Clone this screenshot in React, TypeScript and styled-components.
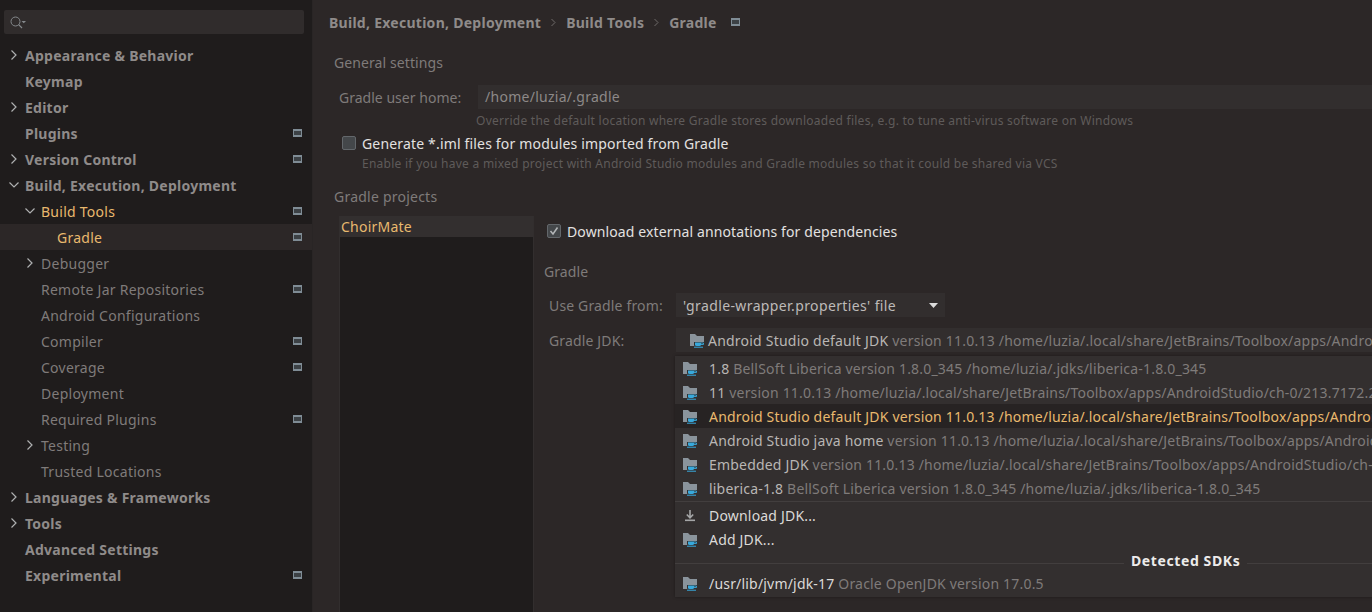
import React from "react";
import styled, { createGlobalStyle } from "styled-components";

const FONT = `"Noto Sans", "Open Sans", sans-serif`;

const Global = createGlobalStyle`
  html, body { margin: 0; padding: 0; background: #2c2727; overflow: hidden; }
  * { box-sizing: border-box; }
  #root { width: 1372px; height: 612px; }
`;

const Page = styled.div`
  display: flex; width: 1372px; height: 612px; overflow: hidden;
  font-family: ${FONT}; font-size: 14px; color: #a5a19f; background: #2c2727;
`;
const Sidebar = styled.aside`
  width: 313px; flex: none; background: #1f1c1c; border-right: 1px solid #292525;
  padding-top: 10px; display: flex; flex-direction: column;
`;
const Search = styled.div`
  margin: 0 8px 0 4px; height: 24px; background: #302c2c; border-radius: 2px;
  display: flex; align-items: center; padding-left: 6px;
`;
const Tree = styled.nav`margin-top: 8px; display: flex; flex-direction: column;`;
const Row = styled.div<{ $level: number; $selected?: boolean }>`
  height: 26px; flex: none; display: flex; align-items: center; position: relative;
  padding-left: ${(p) => 25 + p.$level * 16}px; padding-right: 10px;
  background: ${(p) => (p.$selected ? "#2c2727" : "transparent")};
`;
const RowLabel = styled.span<{ $bold?: boolean; $accent?: boolean }>`
  flex: 1; white-space: nowrap; font-weight: ${(p) => (p.$bold ? 700 : 400)};
  letter-spacing: ${(p) => (p.$bold ? "0.25px" : "0.26px")};
  color: ${(p) => (p.$accent ? "#e9b96e" : p.$bold ? "#8f8b8a" : "#7f7b7a")};
`;
const Arrow = styled.span<{ $level: number }>`
  position: absolute; left: ${(p) => 8 + p.$level * 16}px; top: 7px; width: 12px; height: 12px; display: flex;
`;
const Main = styled.main`
  flex: 1; min-width: 0; position: relative; display: flex; flex-direction: column; padding-left: 16px;
`;
const Crumbs = styled.div`
  height: 44px; flex: none; display: flex; align-items: center; gap: 9px; font-weight: 700; color: #8f8b8a; letter-spacing: 0.27px;
`;
const Sep = styled.span`display: flex; width: 7px; margin: 0;`;
const CrumbPin = styled.span`display: flex; margin-left: 5px;`;
const SectionTitle = styled.div<{ $top: number; $left?: number; $ls?: number }>`
  margin-top: ${(p) => p.$top}px; margin-left: ${(p) => p.$left ?? 5}px; height: 20px; line-height: 20px;
  color: #7f7b7a; letter-spacing: ${(p) => p.$ls ?? 0.09}px;
`;
const FieldRow = styled.div<{ $top: number }>`
  margin-top: ${(p) => p.$top}px; display: flex; align-items: center; height: 24px; margin-left: 10px;
`;
const FieldLabel = styled.span<{ $w: number; $ls?: number }>`
  width: ${(p) => p.$w}px; flex: none; color: #7f7b7a; white-space: nowrap; letter-spacing: ${(p) => p.$ls ?? 0.02}px;
`;
const Input = styled.div`
  flex: 1; height: 24px; line-height: 24px; background: #322e2e; color: #8d8988; padding-left: 7px; font-size: 14px; letter-spacing: 0.27px;
`;
const Hint = styled.div<{ $left: number; $top: number }>`
  margin-left: ${(p) => p.$left}px; margin-top: ${(p) => p.$top}px; height: 16px; line-height: 16px; font-size: 12px;
  color: #5f5b5a; white-space: nowrap; letter-spacing: 0.26px;
`;
const CheckRow = styled.label<{ $left: number; $top: number; $ls: number }>`
  margin-left: ${(p) => p.$left}px; margin-top: ${(p) => p.$top}px; display: flex; align-items: center; gap: 6px; height: 18px;
  color: #e3e1e0; white-space: nowrap; letter-spacing: ${(p) => p.$ls}px;
`;
const Box = styled.span`
  width: 14px; height: 14px; flex: none; border-radius: 2px; background: #44474a; border: 1px solid #63676b;
  display: flex; align-items: center; justify-content: center;
`;
const Projects = styled.div`flex: 1; min-height: 0; margin-top: 9px; display: flex; padding-left: 10px;`;
const ProjectList = styled.div`
  width: 195px; flex: none; background: #1f1c1c; border-left: 1px solid #322e2e; border-right: 1px solid #322e2e;
`;
const ProjectItem = styled.div`
  height: 21px; line-height: 21px; background: #332f2f; color: #e9b96e; padding-left: 1px; letter-spacing: 0.23px;
`;
const Detail = styled.div`flex: 1; min-width: 0; display: flex; flex-direction: column; padding-left: 10px;`;
const GroupTitle = styled(SectionTitle)`margin-left: 0;`;
const Combo = styled.div<{ $w?: number }>`
  height: 24px; ${(p) => (p.$w ? `width: ${p.$w}px;` : "flex: 1; min-width: 0;")} background: #322e2e;
  padding-top: 1px;
  display: flex; align-items: center; white-space: nowrap; overflow: hidden; position: relative; letter-spacing: 0.22px;
`;
const DetailField = styled(FieldRow)`margin-left: 5px;`;
const ComboValue = styled.span`flex: 1; padding-left: 7px; color: #bdbab8; letter-spacing: 0.38px;`;
const ArrowCell = styled.span`
  width: 24px; height: 23px; flex: none; display: flex; align-items: center; justify-content: center;
`;
const IconSlot = styled.span<{ $left: number }>`margin-left: ${(p) => p.$left}px; margin-right: 3px; display: flex; flex: none;`;
const Strong = styled.span<{ $c?: string }>`color: ${(p) => p.$c ?? "#b9b6b4"};`;
const Dim = styled.span<{ $c?: string }>`color: ${(p) => p.$c ?? "#7f7b7a"};`;
const Popup = styled.div`
  position: absolute; left: 362px; top: 356px; width: 700px; height: 241px; background: #332f2f;
  display: flex; flex-direction: column; white-space: nowrap; overflow: hidden; letter-spacing: 0.19px;
  box-shadow: 0 0 3px rgba(0,0,0,.35);
`;
const Option = styled.div<{ $active?: boolean }>`
  height: 24px; flex: none; display: flex; align-items: center; padding: 1px 0 0 8px;
  background: ${(p) => (p.$active ? "#272323" : "transparent")};
`;
const OptionIcon = styled.span`width: 26px; flex: none; display: flex;`;
const Divider = styled.div<{ $top: number; $bottom: number }>`
  height: 1px; flex: none; background: #423e3e; margin: ${(p) => p.$top}px 0 ${(p) => p.$bottom}px;
`;
const GroupHeader = styled.div`
  position: absolute; left: 449px; top: 196px; padding: 0 7px; height: 18px; line-height: 18px;
  background: #332f2f; font-weight: 700; color: #ecebea; letter-spacing: 0.6px;
`;

const Pin = () => (
  <svg width="9" height="8" viewBox="0 0 9 8" style={{ flex: "none" }}>
    <rect width="9" height="8" fill="#7f8c95" />
    <rect x="1" y="2" width="7" height="4" fill="#3c4145" />
  </svg>
);
const Right = () => (
  <svg width="12" height="12" viewBox="0 0 12 12"><path d="M3.5 1.5 8 6 3.5 10.5" fill="none" stroke="#afb0b1" strokeWidth="1.2" /></svg>
);
const Down = () => (
  <svg width="12" height="12" viewBox="0 0 12 12"><path d="M1.5 3.5 6 8 10.5 3.5" fill="none" stroke="#afb0b1" strokeWidth="1.2" /></svg>
);
const Chevron = () => (
  <svg width="6" height="9" viewBox="0 0 6 9"><path d="M1.5 1 5 4.5 1.5 8" fill="none" stroke="#6f6b6a" /></svg>
);
const Jdk = () => (
  <svg width="15" height="15" viewBox="0 0 15 15" style={{ flex: "none" }}>
    <path d="M0 1H5L7 3H14V9H10V13H0Z" fill="#8a949c" />
    <path d="M4 9H11V12A1.5 1.5 0 0 1 9.5 13.5H5.5A1.5 1.5 0 0 1 4 12Z" fill="#332f2f" />
    <path d="M5 9.5H11V11.5A1.5 1.5 0 0 1 9.5 13H6.5A1.5 1.5 0 0 1 5 11.5Z" fill="#38a9dc" />
    <path d="M11 10H13.5V11.5H11" fill="none" stroke="#38a9dc" strokeWidth="0.9" />
    <rect x="4" y="13.7" width="9" height="1" fill="#38a9dc" />
  </svg>
);
const Download = () => (
  <svg width="14" height="14" viewBox="0 0 14 14" style={{ flex: "none" }}>
    <path d="M7 1V8M3.8 5.5 7 8.8 10.2 5.5" fill="none" stroke="#a5a6a7" strokeWidth="1.6" />
    <rect x="2" y="10.5" width="10" height="1.6" fill="#a5a6a7" />
  </svg>
);
const SearchIcon = () => (
  <svg width="18" height="14" viewBox="0 0 18 14">
    <circle cx="5.5" cy="6.5" r="4.5" fill="none" stroke="#85898c" strokeWidth="1" />
    <path d="M8.7 9.7 12 13" stroke="#85898c" strokeWidth="1.2" />
    <path d="M11.5 6H16L13.75 8.2Z" fill="#85898c" />
  </svg>
);

type Item = { t: string; l: number; b?: boolean; a?: "r" | "d"; pin?: boolean; sel?: boolean; acc?: boolean };
const items: Item[] = [
  { t: "Appearance & Behavior", l: 0, b: true, a: "r" },
  { t: "Keymap", l: 0, b: true },
  { t: "Editor", l: 0, b: true, a: "r" },
  { t: "Plugins", l: 0, b: true, pin: true },
  { t: "Version Control", l: 0, b: true, a: "r", pin: true },
  { t: "Build, Execution, Deployment", l: 0, b: true, a: "d" },
  { t: "Build Tools", l: 1, a: "d", pin: true, acc: true },
  { t: "Gradle", l: 2, pin: true, sel: true, acc: true },
  { t: "Debugger", l: 1, a: "r" },
  { t: "Remote Jar Repositories", l: 1, pin: true },
  { t: "Android Configurations", l: 1 },
  { t: "Compiler", l: 1, pin: true },
  { t: "Coverage", l: 1, pin: true },
  { t: "Deployment", l: 1 },
  { t: "Required Plugins", l: 1, pin: true },
  { t: "Testing", l: 1, a: "r" },
  { t: "Trusted Locations", l: 1 },
  { t: "Languages & Frameworks", l: 0, b: true, a: "r" },
  { t: "Tools", l: 0, b: true, a: "r" },
  { t: "Advanced Settings", l: 0, b: true },
  { t: "Experimental", l: 0, b: true, pin: true },
];

const P = "/home/luzia/.local/share/JetBrains/Toolbox/apps/AndroidStudio/ch-0/213.7172.25.2113.9123335/jbr";
const options = [
  { s: "1.8", d: "BellSoft Liberica version 1.8.0_345 /home/luzia/.jdks/liberica-1.8.0_345" },
  { s: "11", d: `version 11.0.13 ${P}` },
  { s: "Android Studio default JDK", d: `version 11.0.13 ${P}`, active: true },
  { s: "Android Studio java home", d: `version 11.0.13 ${P}` },
  { s: "Embedded JDK", d: `version 11.0.13 ${P}` },
  { s: "liberica-1.8", d: "BellSoft Liberica version 1.8.0_345 /home/luzia/.jdks/liberica-1.8.0_345" },
];

export default function App() {
  return (
    <Page>
      <Global />
      <Sidebar>
        <Search><SearchIcon /></Search>
        <Tree>
          {items.map((i) => (
            <Row key={i.t} $level={i.l} $selected={i.sel}>
              {i.a && <Arrow $level={i.l}>{i.a === "r" ? <Right /> : <Down />}</Arrow>}
              <RowLabel $bold={i.b} $accent={i.acc}>{i.t}</RowLabel>
              {i.pin && <Pin />}
            </Row>
          ))}
        </Tree>
      </Sidebar>
      <Main>
        <Crumbs>
          <span>Build, Execution, Deployment</span>
          <Sep><Chevron /></Sep>
          <span>Build Tools</span>
          <Sep><Chevron /></Sep>
          <span>Gradle</span>
          <CrumbPin><Pin /></CrumbPin>
        </Crumbs>
        <SectionTitle $top={9}>General settings</SectionTitle>
        <FieldRow $top={12}>
          <FieldLabel $w={139}>Gradle user home:</FieldLabel>
          <Input>/home/luzia/.gradle</Input>
        </FieldRow>
        <Hint $left={147} $top={4}>Override the default location where Gradle stores downloaded files, e.g. to tune anti-virus software on Windows</Hint>
        <CheckRow $left={13} $top={5} $ls={0.17}><Box />Generate *.iml files for modules imported from Gradle</CheckRow>
        <Hint $left={33} $top={4}>Enable if you have a mixed project with Android Studio modules and Gradle modules so that it could be shared via VCS</Hint>
        <SectionTitle $top={15} $ls={0.23}>Gradle projects</SectionTitle>
        <Projects>
          <ProjectList><ProjectItem>ChoirMate</ProjectItem></ProjectList>
          <Detail>
            <CheckRow $left={3} $top={6} $ls={0.12}>
              <Box><svg width="10" height="10" viewBox="0 0 10 10"><path d="M1.5 5 4 8 8.5 1.5" fill="none" stroke="#b4b6b8" strokeWidth="1.5" /></svg></Box>
              Download external annotations for dependencies
            </CheckRow>
            <GroupTitle $top={22}>Gradle</GroupTitle>
            <DetailField $top={11}>
              <FieldLabel $w={127} $ls={0.15}>Use Gradle from:</FieldLabel>
              <Combo $w={269}>
                <ComboValue>'gradle-wrapper.properties' file</ComboValue>
                <ArrowCell><svg width="9" height="5" viewBox="0 0 9 5"><path d="M0 0H9L4.5 5Z" fill="#dcdcdc" /></svg></ArrowCell>
              </Combo>
            </DetailField>
            <DetailField $top={11}>
              <FieldLabel $w={127} $ls={0.15}>Gradle JDK:</FieldLabel>
              <Combo>
                <IconSlot $left={14}><Jdk /></IconSlot>
                <Strong>Android Studio default JDK</Strong><Dim>&nbsp;version 11.0.13 {P}</Dim>
              </Combo>
            </DetailField>
          </Detail>
        </Projects>
        <Popup>
          {options.map((o) => (
            <Option key={o.s} $active={o.active}>
              <OptionIcon><Jdk /></OptionIcon>
              {o.active ? <Strong $c="#e9b96e">{o.s}&nbsp;{o.d}</Strong> : <><Strong>{o.s}&nbsp;</Strong><Dim>{o.d}</Dim></>}
            </Option>
          ))}
          <Divider $top={1} $bottom={1} />
          <Option><OptionIcon><Download /></OptionIcon><Strong $c="#dcdad8">Download JDK...</Strong></Option>
          <Option><OptionIcon><Jdk /></OptionIcon><Strong $c="#dcdad8">Add JDK...</Strong></Option>
          <Divider $top={12} $bottom={7} />
          <Option><OptionIcon><Jdk /></OptionIcon><Strong $c="#dcdad8">/usr/lib/jvm/jdk-17</Strong><Dim>&nbsp;Oracle OpenJDK version 17.0.5</Dim></Option>
          <GroupHeader>Detected SDKs</GroupHeader>
        </Popup>
      </Main>
    </Page>
  );
}
